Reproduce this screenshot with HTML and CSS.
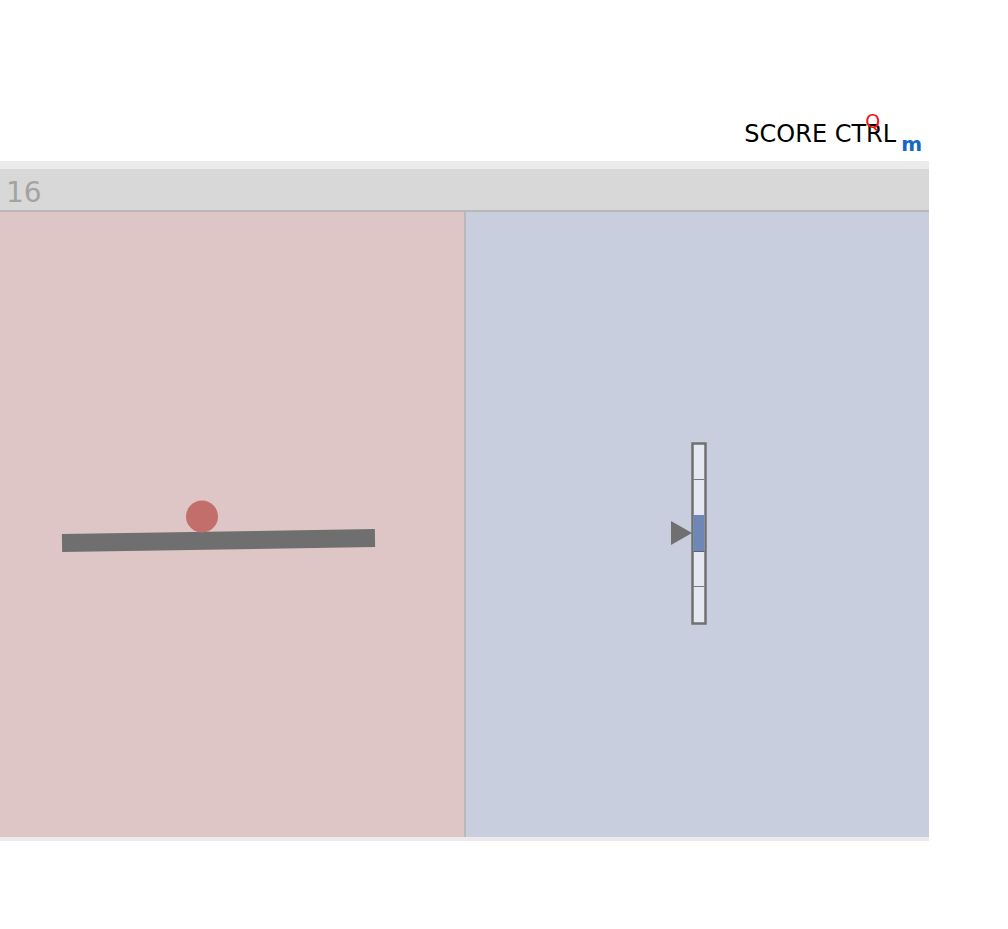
FILE: index.html
```html
<!DOCTYPE html>
<html>
<head>
<meta charset="utf-8">
<link rel="stylesheet" href="styles.css">
</head>
<body>
<div class="app">
  <div class="top">
    <div class="title">
      <span class="title-text">SCORE CTRL</span>
      <span class="badge-q">Q</span>
      <span class="sub-m">m</span>
    </div>
  </div>
  <div class="board">
    <div class="header"><span class="count">16</span></div>
    <div class="panels">
      <div class="panel panel-left">
        <svg class="scene" width="464" height="625" viewBox="0 0 464 625">
          <rect x="62" y="319.5" width="313" height="18" fill="#6f6f6f" transform="rotate(-0.915 218.5 328.5)"/>
          <circle cx="202" cy="304.5" r="16" fill="#c46e6c"/>
        </svg>
      </div>
      <div class="divider"></div>
      <div class="panel panel-right">
        <svg class="scene" width="463" height="625" viewBox="0 0 463 625">
          <rect x="226.5" y="231.5" width="13" height="180" fill="#e5e8f0" stroke="#707070" stroke-width="2.5"/>
          <line x1="227.5" y1="267.5" x2="238.5" y2="267.5" stroke="#7a7a7a" stroke-width="1"/>
          <line x1="227.5" y1="374.5" x2="238.5" y2="374.5" stroke="#7a7a7a" stroke-width="1"/>
          <rect x="227.5" y="303" width="10.5" height="36.5" fill="#6e87b7"/>
          <line x1="227.5" y1="339.5" x2="238.5" y2="339.5" stroke="#606060" stroke-width="1"/>
          <polygon points="205,309 205,333 226,321" fill="#707070"/>
        </svg>
      </div>
    </div>
  </div>
</div>
</body>
</html>
```

FILE: styles.css
```css
html, body {
  margin: 0;
  padding: 0;
  background: #ffffff;
}

.app {
  width: 929px;
  font-family: "DejaVu Sans", Verdana, sans-serif;
}

.top {
  height: 161px;
  display: flex;
  justify-content: flex-end;
  align-items: flex-start;
  box-sizing: border-box;
  padding-top: 116px;
  padding-right: 7px;
}

.title {
  position: relative;
  display: flex;
  align-items: baseline;
}

.title-text {
  font-size: 24px;
  line-height: 36px;
  color: #000000;
}

.badge-q {
  position: absolute;
  left: 121px;
  top: -6px;
  font-size: 19px;
  line-height: 22px;
  color: #ee1111;
}

.sub-m {
  position: relative;
  top: 9px;
  margin-left: 5px;
  font-size: 20px;
  font-weight: bold;
  color: #1167cc;
}

.board {
  background: #ebebeb;
  padding-top: 8px;
  padding-bottom: 4px;
}

.header {
  height: 41px;
  background: #d8d8d8;
  border-bottom: 2px solid #b8b8b8;
  display: flex;
  align-items: flex-start;
  padding-left: 6px;
}

.count {
  font-size: 28px;
  line-height: 48px;
  margin-top: 0;
  color: #a3a3a3;
}

.panels {
  display: flex;
  height: 625px;
}

.panel {
  height: 625px;
}

.panel-left {
  width: 464px;
  background: #dfc6c6;
}

.divider {
  width: 2px;
  background: #b9b9b9;
}

.panel-right {
  width: 463px;
  background: #c8cedd;
}

.scene {
  display: block;
}
```
